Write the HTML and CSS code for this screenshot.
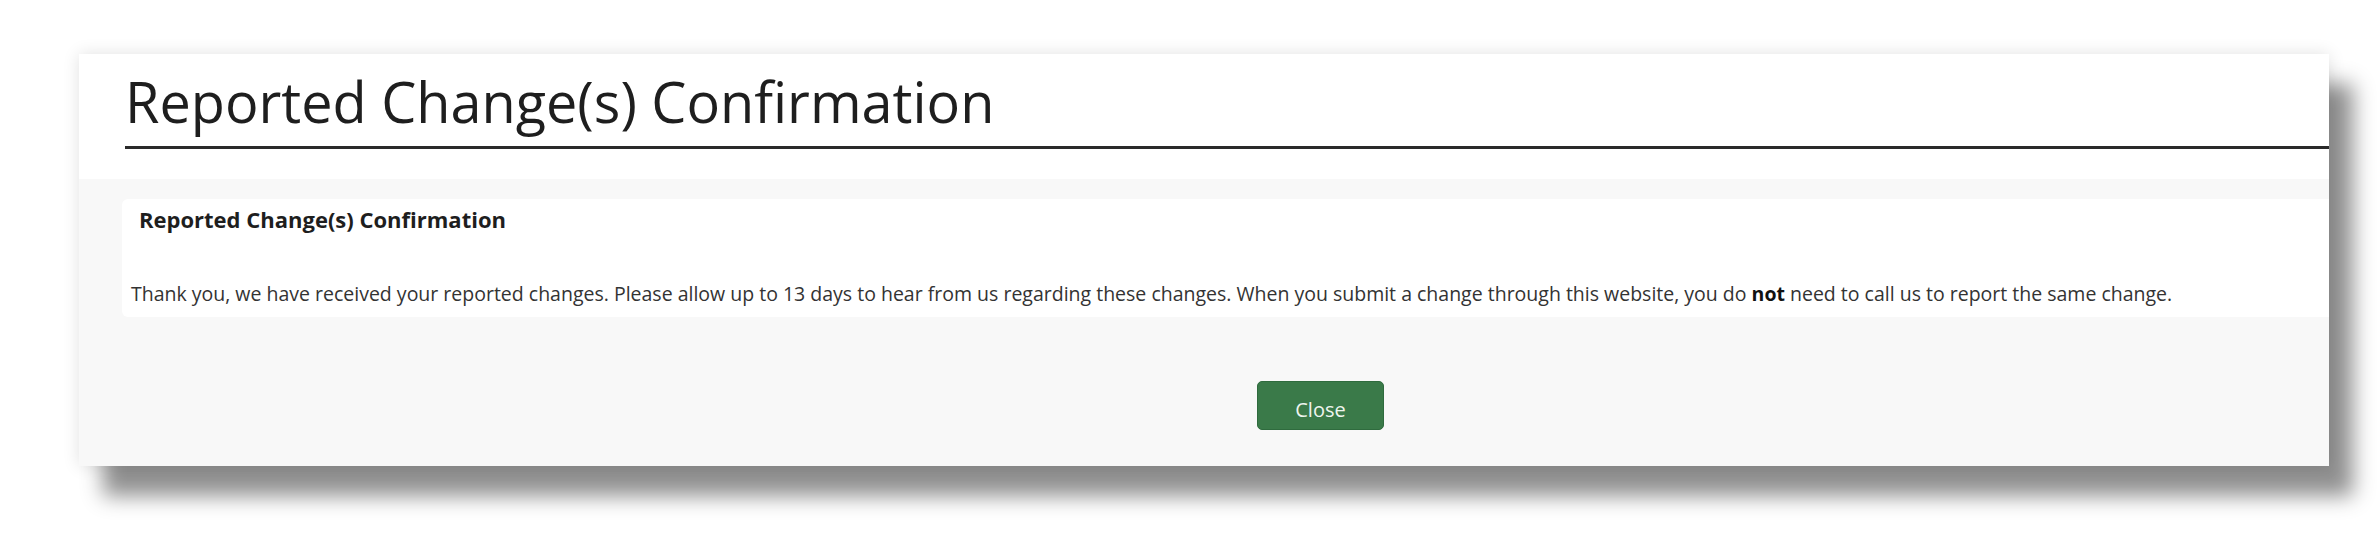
FILE: index.html
```html
<!DOCTYPE html>
<html lang="en">
<head>
<meta charset="utf-8">
<title>Reported Change(s) Confirmation</title>
<link rel="stylesheet" href="styles.css">
</head>
<body>
<div class="panel">
  <div class="page-header">
    <h1 class="page-title">Reported Change(s) Confirmation</h1>
  </div>
  <div class="page-body">
    <section class="card">
      <h2 class="card-title">Reported Change(s) Confirmation</h2>
      <p class="card-text">Thank you, we have received your reported changes. Please allow up to 13 days to hear from us regarding these changes. When you submit a change through this website, you do <strong>not</strong> need to call us to report the same change.</p>
    </section>
    <div class="actions">
      <button class="btn-close" type="button">Close</button>
    </div>
  </div>
</div>
</body>
</html>
```
FILE: styles.css
```css
* { box-sizing: border-box; }
html, body { margin: 0; padding: 0; background: #ffffff; }
body {
  font-family: "Open Sans", "Noto Sans", sans-serif;
  color: #222;
  min-height: 546px;
  padding: 54px 0 80px 79px;
}

.panel {
  width: 2250px;
  height: 412px;
  background: #ffffff;
  display: flex;
  flex-direction: column;
  box-shadow: 24px 30px 20px rgba(0,0,0,0.44), 0 0 16px rgba(0,0,0,0.12);
}

.page-header {
  margin-left: 46px;
  height: 95px;
  border-bottom: 3px solid #2a2a2a;
  display: flex;
  align-items: flex-end;
}
.page-title {
  margin: 0 0 17px 0;
  font-weight: 400;
  font-size: 55.8px;
  line-height: 56px;
  color: #1e1e1e;
}

.page-body {
  flex: 1;
  margin-top: 30px;
  background: #f8f8f8;
  padding: 20px 0 0 43px;
  display: flex;
  flex-direction: column;
}

.card {
  background: #ffffff;
  border-radius: 6px 0 0 6px;
  height: 118px;
  padding: 5px 0 0 17px;
}
.card-title {
  margin: 0;
  font-size: 22px;
  font-weight: 700;
  line-height: 30px;
  color: #1e1e1e;
}
.card-text {
  margin: 47px 0 0 -8px;
  font-size: 19.5px;
  line-height: 26px;
  color: #333;
}
.card-text strong { color: #111; }

.actions {
  padding: 64px 0 0 1135px;
}
.btn-close {
  width: 127px;
  height: 49px;
  padding: 7px 0 0 0;
  border: 1px solid #2f6b3e;
  border-radius: 5px;
  background: #3a7a49;
  color: #eef5ef;
  font-family: "Open Sans", sans-serif;
  font-size: 20px;
}
```
